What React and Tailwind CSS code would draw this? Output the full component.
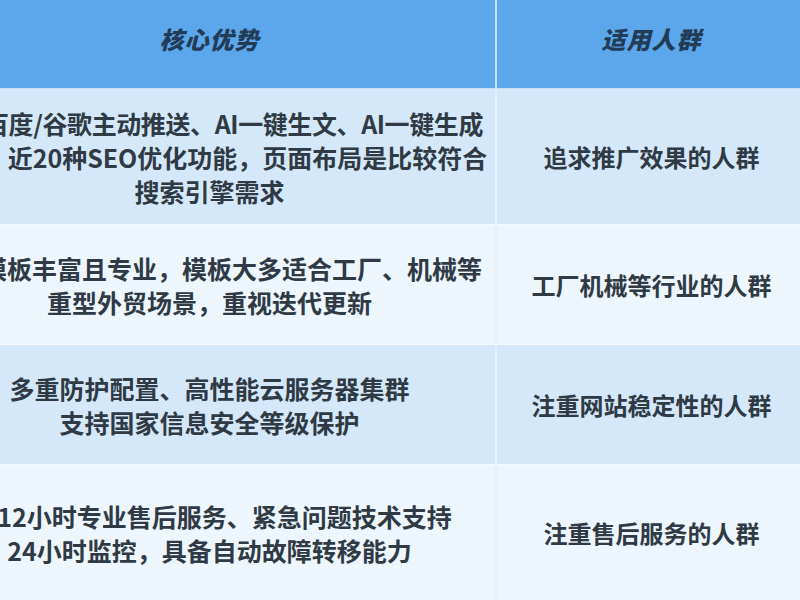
import React from 'react';

const rows = [
  {
    bg: 'bg-[#d5e8f9]',
    h: 'h-[136px]',
    lines: [
      { text: '百度/谷歌主动推送、AI一键生文、AI一键生成', shift: 'ml-[48px] tracking-[-0.4px]' },
      { text: '近20种SEO优化功能，页面布局是比较符合', shift: 'ml-[76px]' },
      { text: '搜索引擎需求', shift: '' },
    ],
    fit: '追求推广效果的人群',
  },
  {
    bg: 'bg-[#edf5fd]',
    h: 'h-[120px]',
    lines: [
      { text: '模板丰富且专业，模板大多适合工厂、机械等', shift: 'ml-[45px]' },
      { text: '重型外贸场景，重视迭代更新', shift: '' },
    ],
    fit: '工厂机械等行业的人群',
  },
  {
    bg: 'bg-[#d5e8f9]',
    h: 'h-[120px]',
    lines: [
      { text: '多重防护配置、高性能云服务器集群', shift: '' },
      { text: '支持国家信息安全等级保护', shift: '' },
    ],
    fit: '注重网站稳定性的人群',
  },
  {
    bg: 'bg-[#edf5fd]',
    h: 'h-[136px]',
    lines: [
      { text: '12小时专业售后服务、紧急问题技术支持', shift: 'ml-[30px]' },
      { text: '24小时监控，具备自动故障转移能力', shift: '' },
    ],
    fit: '注重售后服务的人群',
  },
];

export default function App() {
  return (
    <div className="w-[800px] h-[600px] overflow-hidden bg-[#edf5fd] font-['Noto_Sans_CJK_SC',sans-serif]">
      {/* table is wider than the view: left edge is cropped */}
      <div className="-ml-[76px] w-[882px]">
        {/* Header */}
        <div className="flex h-[89px] bg-[#5ca7ec] border-b border-[#c6e1f8]">
          <div className="w-[573px] flex items-center justify-center pb-[10px] border-r-2 border-[#cbe3f8]">
            <span className="text-[24px] font-black italic text-[#223b57] tracking-[1px]">核心优势</span>
          </div>
          <div className="flex-1 flex items-center justify-center pb-[10px]">
            <span className="text-[24px] font-black italic text-[#223b57] tracking-[1px]">适用人群</span>
          </div>
        </div>

        {/* Body rows */}
        {rows.map((row, i) => (
          <div key={i} className={`flex ${row.h} ${row.bg} border-b border-[#f4f9fe]`}>
            <div className="w-[573px] flex flex-col items-center justify-center border-r-2 border-[#e6f1fc] text-[25px] leading-[34px] font-bold text-[#2f3a45]">
              {row.lines.map((line, j) => (
                <div key={j} className={`whitespace-nowrap ${line.shift}`}>
                  {line.text}
                </div>
              ))}
            </div>
            <div className="flex-1 flex items-center justify-center text-[24px] font-bold text-[#2f3a45] whitespace-nowrap">
              {row.fit}
            </div>
          </div>
        ))}
      </div>
    </div>
  );
}
